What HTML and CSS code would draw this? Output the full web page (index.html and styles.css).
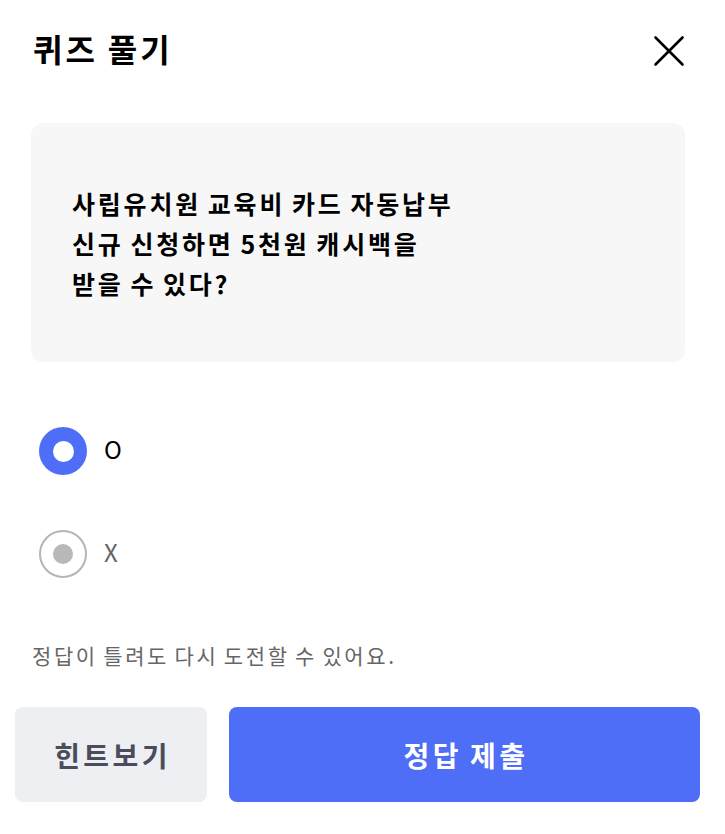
FILE: index.html
```html
<!DOCTYPE html>
<html lang="ko">
<head>
<meta charset="utf-8">
<title>퀴즈 풀기</title>
<link rel="stylesheet" href="styles.css">
</head>
<body>
<div class="sheet">
  <header class="header">
    <h1 class="title">퀴즈 풀기</h1>
    <button class="close" aria-label="닫기">
      <svg width="32" height="32" viewBox="0 0 32 32" fill="none" stroke="#000" stroke-width="2.6" stroke-linecap="round">
        <path d="M2.5 2.5 L29.5 29.5 M29.5 2.5 L2.5 29.5"/>
      </svg>
    </button>
  </header>

  <section class="question">
    <p class="question-text">사립유치원 교육비 카드 자동납부<br>신규 신청하면 5천원 캐시백을<br>받을 수 있다?</p>
  </section>

  <div class="options">
    <label class="option">
      <span class="radio radio-on"><span class="dot"></span></span>
      <span class="option-label">O</span>
    </label>
    <label class="option option-off">
      <span class="radio radio-off"><span class="dot"></span></span>
      <span class="option-label">X</span>
    </label>
  </div>

  <p class="notice">정답이 틀려도 다시 도전할 수 있어요.</p>

  <div class="actions">
    <button class="btn btn-hint">힌트보기</button>
    <button class="btn btn-submit">정답 제출</button>
  </div>
</div>
</body>
</html>
```

FILE: styles.css
```css
* { box-sizing: border-box; }

html, body {
  margin: 0;
  padding: 0;
  background: #ffffff;
}

body {
  font-family: "Noto Sans CJK KR", "Noto Sans", sans-serif;
  color: #000;
}

.sheet {
  width: 725px;
  height: 834px;
  display: flex;
  flex-direction: column;
}

.header {
  display: flex;
  align-items: flex-start;
  justify-content: space-between;
  padding: 24px 40px 0 33px;
  height: 123px;
}

.title {
  margin: 0;
  font-size: 32px;
  line-height: 48px;
  font-weight: 700;
  letter-spacing: 3px;
  word-spacing: -2px;
}

.close {
  border: 0;
  background: none;
  padding: 0;
  margin-top: 11px;
  width: 32px;
  height: 32px;
  display: block;
}

.close svg { display: block; }

.question {
  margin: 0 40px 0 31px;
  height: 239px;
  background: #f7f7f7;
  border-radius: 12px;
  display: flex;
  align-items: center;
  padding: 0 41px;
}

.question-text {
  margin: 0;
  font-size: 25px;
  line-height: 40px;
  font-weight: 700;
  letter-spacing: 2.8px;
  word-spacing: -3px;
}

.options {
  display: flex;
  flex-direction: column;
  gap: 55px;
  padding: 65px 0 0 39px;
}

.option {
  display: flex;
  align-items: center;
  gap: 17px;
  height: 48px;
}

.radio {
  width: 48px;
  height: 48px;
  border-radius: 50%;
  display: flex;
  align-items: center;
  justify-content: center;
}

.radio-on {
  background: #4f6ef7;
}

.radio-on .dot {
  width: 21px;
  height: 21px;
  border-radius: 50%;
  background: #fff;
}

.radio-off {
  border: 2px solid #b5b5b5;
  background: #fff;
}

.radio-off .dot {
  width: 20px;
  height: 20px;
  border-radius: 50%;
  background: #b8b8b8;
}

.option-label {
  font-size: 24px;
  font-weight: 400;
  color: #000;
  margin-top: -5px;
}

.option-off .option-label {
  color: #666;
}

.notice {
  margin: 62px 0 0 32px;
  font-size: 21px;
  line-height: 30px;
  color: #666;
  letter-spacing: 2.6px;
  word-spacing: -3px;
}

.actions {
  display: flex;
  gap: 22px;
  padding: 0 25px 0 15px;
  margin-top: 37px;
}

.btn {
  border: 0;
  height: 95px;
  border-radius: 8px;
  font-family: "Noto Sans CJK KR", "Noto Sans", sans-serif;
  font-size: 28px;
  font-weight: 700;
  letter-spacing: 3.4px;
  word-spacing: -3px;
  text-indent: 3px;
}

.btn-hint {
  width: 192px;
  background: #eeeff3;
  color: #4a4c5c;
}

.btn-submit {
  flex: 1;
  background: #4f6ef7;
  color: #fff;
}
```
